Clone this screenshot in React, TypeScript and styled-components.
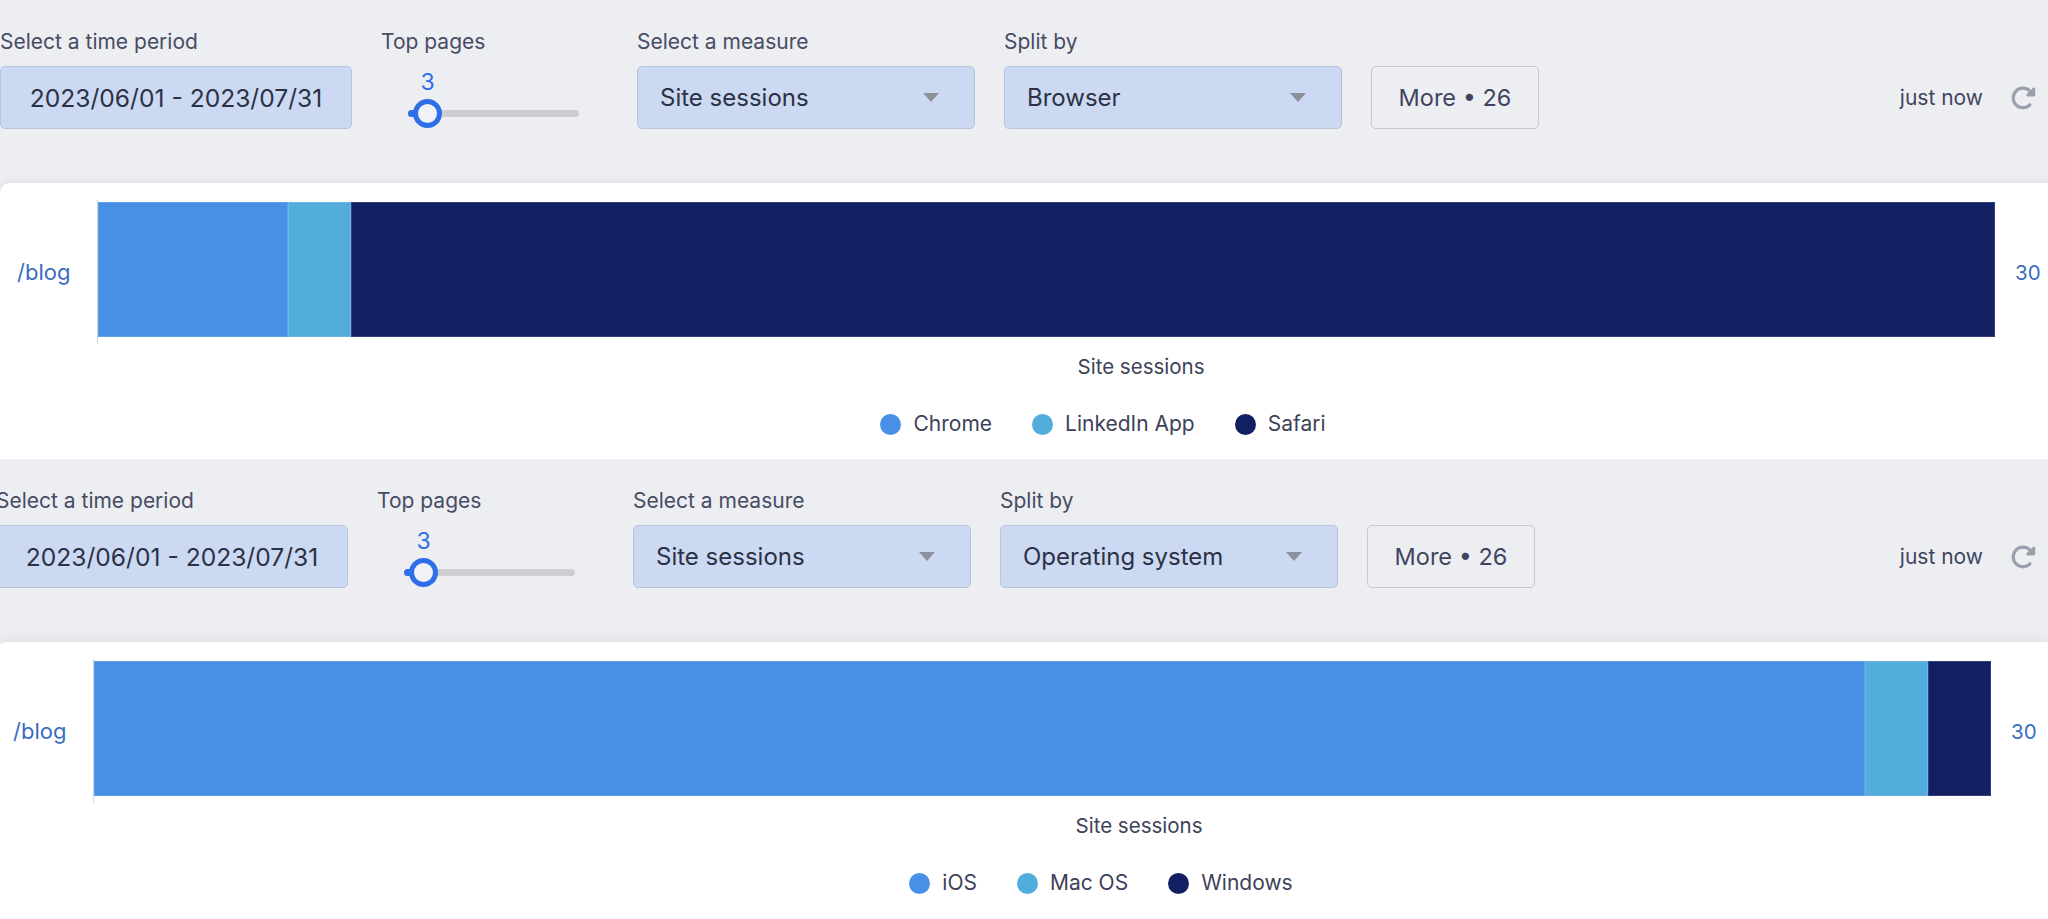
import React from 'react';
import styled, { createGlobalStyle } from 'styled-components';

const GlobalStyle = createGlobalStyle`
  html, body {
    margin: 0;
    padding: 0;
    background: #ffffff;
    overflow: hidden;
  }
  body {
    font-family: Inter, "Liberation Sans", Arial, sans-serif;
    color: #3d4259;
  }
`;

const Page = styled.div`
  width: 2048px;
  display: flex;
  flex-direction: column;
`;

const Panel = styled.section<{ $shift: number }>`
  margin-left: -${(p) => p.$shift}px;
  width: calc(100% + ${(p) => p.$shift}px);
  background: #edeef2;
  display: flex;
  flex-direction: column;
`;

const Controls = styled.div`
  display: flex;
  align-items: flex-end;
  gap: 29px;
  padding: 30px 12px 54px 0;
`;

const Field = styled.div<{ $width: number }>`
  width: ${(p) => p.$width}px;
  display: flex;
  flex-direction: column;
  gap: 12px;
`;

const Label = styled.div`
  font-size: 21px;
  line-height: 24px;
  color: #474c63;
  white-space: nowrap;
`;

const Box = styled.div<{ $centered?: boolean }>`
  height: 63px;
  box-sizing: border-box;
  border: 1px solid #b9c4d8;
  border-radius: 5px;
  background: #cbdaf2;
  display: flex;
  align-items: center;
  justify-content: ${(p) => (p.$centered ? 'center' : 'space-between')};
  padding: ${(p) => (p.$centered ? '0' : '0 35px 0 22px')};
  font-size: ${(p) => (p.$centered ? '24.6px' : '24px')};
  color: #2c3145;
  white-space: nowrap;
`;

const Caret = styled.span`
  width: 0;
  height: 0;
  border-left: 8px solid transparent;
  border-right: 8px solid transparent;
  border-top: 9px solid #8d919c;
`;

const SliderArea = styled.div`
  height: 63px;
  padding-left: 27px;
  display: flex;
  flex-direction: column;
`;

const SliderValue = styled.div`
  width: 29px;
  margin: 4px 0 0 5px;
  text-align: center;
  font-size: 23px;
  line-height: 24px;
  color: #2e6fe9;
`;

const Track = styled.div`
  position: relative;
  margin-top: 16px;
  width: 171px;
  height: 7px;
  border-radius: 4px;
  background: #cdced2;
`;

const TrackFill = styled.div`
  position: absolute;
  left: 0;
  top: 0;
  height: 100%;
  border-radius: 4px 0 0 4px;
  background: #2e6fe9;
`;

const Thumb = styled.div`
  position: absolute;
  top: -11px;
  left: 5px;
  width: 29px;
  height: 29px;
  box-sizing: border-box;
  border-radius: 50%;
  border: 5px solid #2e6fe9;
  background: #f1f2f5;
`;

const MoreButton = styled.button`
  width: 168px;
  height: 63px;
  box-sizing: border-box;
  border: 1px solid #c5c8ce;
  border-radius: 5px;
  background: transparent;
  font-family: inherit;
  font-size: 23.5px;
  color: #3f4560;
  padding: 0;
`;

const Status = styled.div`
  margin-left: auto;
  height: 63px;
  display: flex;
  align-items: center;
  gap: 27px;
  font-size: 21px;
  color: #3f4560;
`;

const RefreshIcon = styled.svg`
  width: 26px;
  height: 26px;
  fill: #9ba0ae;
`;

const Card = styled.div`
  background: #ffffff;
  border-radius: 10px 0 0 0;
  box-shadow: 0 -3px 8px rgba(30, 40, 70, 0.06);
  padding: 17px 0 23px 0;
  display: flex;
  flex-direction: column;
`;

const ChartRow = styled.div`
  display: flex;
  align-items: stretch;
`;

const RowLabel = styled.div`
  width: 97px;
  box-sizing: border-box;
  padding-left: 17px;
  display: flex;
  align-items: center;
  font-size: 22px;
  color: #3a6cc0;
`;

const Plot = styled.div`
  width: 1897px;
  border-left: 1px solid #c8d2e4;
  padding: 2px 0 7px 0;
`;

const Bar = styled.div`
  height: 135px;
  display: flex;
`;

const Segment = styled.div<{ $color: string }>`
  height: 100%;
  background: ${(p) => p.$color};
  box-shadow: inset 0 0 0 1px rgba(255, 255, 255, 0.14);
`;

const RowTotal = styled.div`
  padding-left: 20px;
  display: flex;
  align-items: center;
  font-size: 20.5px;
  color: #3a6cc0;
`;

const AxisTitle = styled.div`
  margin-top: 11px;
  padding-left: 234px;
  text-align: center;
  font-size: 20.5px;
  line-height: 24px;
  color: #3d4259;
`;

const Legend = styled.div`
  margin-top: 33px;
  padding-left: 158px;
  display: flex;
  justify-content: center;
  gap: 40px;
`;

const LegendItem = styled.div`
  display: flex;
  align-items: center;
  gap: 12px;
  font-size: 21px;
  line-height: 24px;
  color: #3d4259;
`;

const Dot = styled.span<{ $color: string }>`
  width: 21px;
  height: 21px;
  border-radius: 50%;
  background: ${(p) => p.$color};
`;

type Series = { name: string; value: number; color: string };

const COLORS = ['#4790e5', '#52acdc', '#131f63'];
const MAX = 30;

const panels: { shift: number; split: string; series: Series[] }[] = [
  {
    shift: 0,
    split: 'Browser',
    series: [
      { name: 'Chrome', value: 3, color: COLORS[0] },
      { name: 'LinkedIn App', value: 1, color: COLORS[1] },
      { name: 'Safari', value: 26, color: COLORS[2] },
    ],
  },
  {
    shift: 4,
    split: 'Operating system',
    series: [
      { name: 'iOS', value: 28, color: COLORS[0] },
      { name: 'Mac OS', value: 1, color: COLORS[1] },
      { name: 'Windows', value: 1, color: COLORS[2] },
    ],
  },
];

const Refresh = () => (
  <RefreshIcon viewBox="0 0 512 512">
    <path d="M463.5 224H472c13.3 0 24-10.7 24-24V72c0-9.7-5.8-18.5-14.8-22.2s-19.3-1.7-26.2 5.2L413.4 96.6c-87.6-86.5-228.7-86.2-315.8 1c-87.5 87.5-87.5 229.3 0 316.8s229.3 87.5 316.8 0c12.5-12.5 12.5-32.8 0-45.3s-32.8-12.5-45.3 0c-62.5 62.5-163.8 62.5-226.3 0s-62.5-163.8 0-226.3c62.2-62.2 162.7-62.5 225.3-1L327 183c-6.9 6.9-8.9 17.2-5.2 26.2s12.5 14.8 22.2 14.8H463.5z" />
  </RefreshIcon>
);

const Report = ({ shift, split, series }: { shift: number; split: string; series: Series[] }) => {
  const total = series.reduce((s, x) => s + x.value, 0);
  return (
    <Panel $shift={shift}>
      <Controls>
        <Field $width={352}>
          <Label>Select a time period</Label>
          <Box $centered>2023/06/01 - 2023/07/31</Box>
        </Field>

        <Field $width={227}>
          <Label>Top pages</Label>
          <SliderArea>
            <SliderValue>3</SliderValue>
            <Track>
              <TrackFill style={{ width: 19 }} />
              <Thumb />
            </Track>
          </SliderArea>
        </Field>

        <Field $width={338}>
          <Label>Select a measure</Label>
          <Box>
            Site sessions
            <Caret />
          </Box>
        </Field>

        <Field $width={338}>
          <Label>Split by</Label>
          <Box>
            {split}
            <Caret />
          </Box>
        </Field>

        <MoreButton>More • 26</MoreButton>

        <Status>
          just now
          <Refresh />
        </Status>
      </Controls>

      <Card>
        <ChartRow>
          <RowLabel>/blog</RowLabel>
          <Plot>
            <Bar>
              {series.map((s) => (
                <Segment key={s.name} $color={s.color} style={{ width: `${(s.value / MAX) * 100}%` }} />
              ))}
            </Bar>
          </Plot>
          <RowTotal>{total}</RowTotal>
        </ChartRow>

        <AxisTitle>Site sessions</AxisTitle>

        <Legend>
          {series.map((s) => (
            <LegendItem key={s.name}>
              <Dot $color={s.color} />
              {s.name}
            </LegendItem>
          ))}
        </Legend>
      </Card>
    </Panel>
  );
};

const App = () => (
  <>
    <GlobalStyle />
    <Page>
      {panels.map((p) => (
        <Report key={p.split} {...p} />
      ))}
    </Page>
  </>
);

export default App;
